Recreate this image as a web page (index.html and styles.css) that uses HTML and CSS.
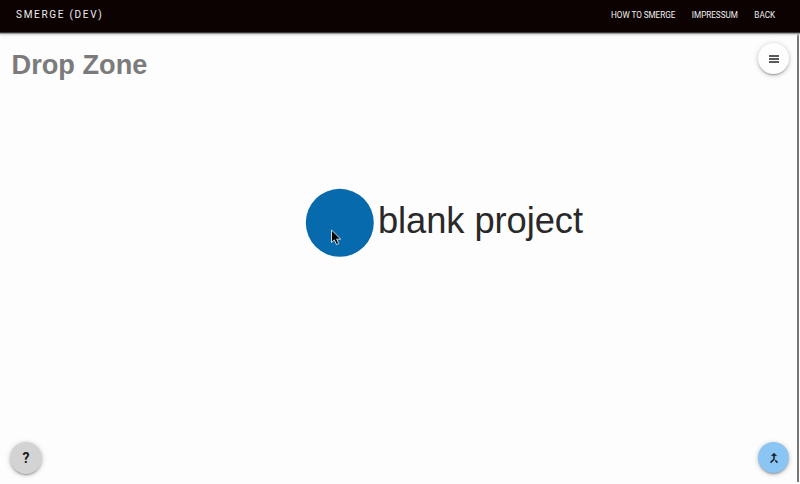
FILE: index.html
```html
<!DOCTYPE html>
<html lang="en">
<head>
<meta charset="utf-8">
<title>Smerge</title>
<link rel="stylesheet" href="styles.css">
</head>
<body>
<header class="bar">
  <a class="brand">SMERGE (DEV)</a>
  <nav class="nav"><a>HOW TO SMERGE</a><a>IMPRESSUM</a><a>BACK</a></nav>
</header>
<main class="zone">
  <h1 class="title">Drop Zone</h1>
  <svg class="graph" width="300" height="80" viewBox="0 0 300 80">
    <circle cx="39.8" cy="39.8" r="34" fill="#066aac"/>
    <text class="label" x="78" y="50" textLength="205">blank project</text>
    <path d="M31.500 47v12.500l2.800-2.600 2.200 4.700 2.300-1-2.100-4.500h4z" fill="#080808" stroke="#e4e8ec" stroke-width=".9"/>
  </svg>
  <button class="fab menu" aria-label="Menu"><svg width="10" height="8" viewBox="0 0 10 8"><path d="M0 1h10M0 4h10M0 7h10" stroke="#242424" stroke-width="1.3"/></svg></button>
  <button class="fab help">?</button>
  <button class="fab merge" aria-label="Merge"><svg width="14" height="14" viewBox="0 0 24 24"><path d="M17 20.410 18.410 19 15 15.590 13.590 17 17 20.410zM7.500 8H11v5.590L5.590 19 7 20.410l6-6V8h3.500L12 3.500 7.500 8z" fill="#17212a" stroke="#17212a" stroke-width=".8"/></svg></button>
</main>
</body>
</html>
```
FILE: styles.css
```css
* { box-sizing: border-box; }
body {
  margin: 0;
  height: 484px;
  display: flex;
  flex-direction: column;
  overflow: hidden;
  background: #fdfdfd;
  font-family: "Liberation Sans", Arial, sans-serif;
}
.bar {
  position: relative;
  z-index: 1;
  height: 33px;
  flex: none;
  display: flex;
  justify-content: space-between;
  padding: 0 25px 0 16px;
  line-height: 30px;
  background: #0d0202;
  border-bottom: 1px solid #39363a;
  box-shadow: 0 1px 1px #999, 0 2px 3px #ddd;
  color: #eee;
  font-family: Roboto, sans-serif;
}
.brand { font-size: 10px; letter-spacing: 1.7px; }
.nav { display: flex; gap: 16.5px; font-size: 8.2px; letter-spacing: -.05px; }
.zone {
  position: relative;
  flex: 1;
  margin: 0 1px 2px 0;
  border-right: 2px solid #777;
}
.title {
  margin: 0;
  padding: 16px 0 0 11.5px;
  font-size: 27.2px;
  line-height: 32px;
  color: #7b7b7b;
}
.graph { position: absolute; left: 300px; top: 150px; }
.label { font-size: 36.3px; fill: #292929; }
.fab {
  position: absolute;
  display: flex;
  align-items: center;
  justify-content: center;
  width: 31px;
  height: 31px;
  padding: 0;
  border: 0;
  border-radius: 50%;
  background: #fefefe;
  box-shadow: 0 2px 2px -1px rgba(0,0,0,.3), 0 1px 5px rgba(0,0,0,.25);
}
.menu { right: 8px; top: 10px; }
.help {
  left: 10px;
  bottom: 8px;
  width: 32px;
  height: 32px;
  background: #d3d3d3;
  color: #191919;
  font: bold 14px Roboto, sans-serif;
}
.merge { right: 8px; bottom: 9px; background: #8bc5f4; }
```
